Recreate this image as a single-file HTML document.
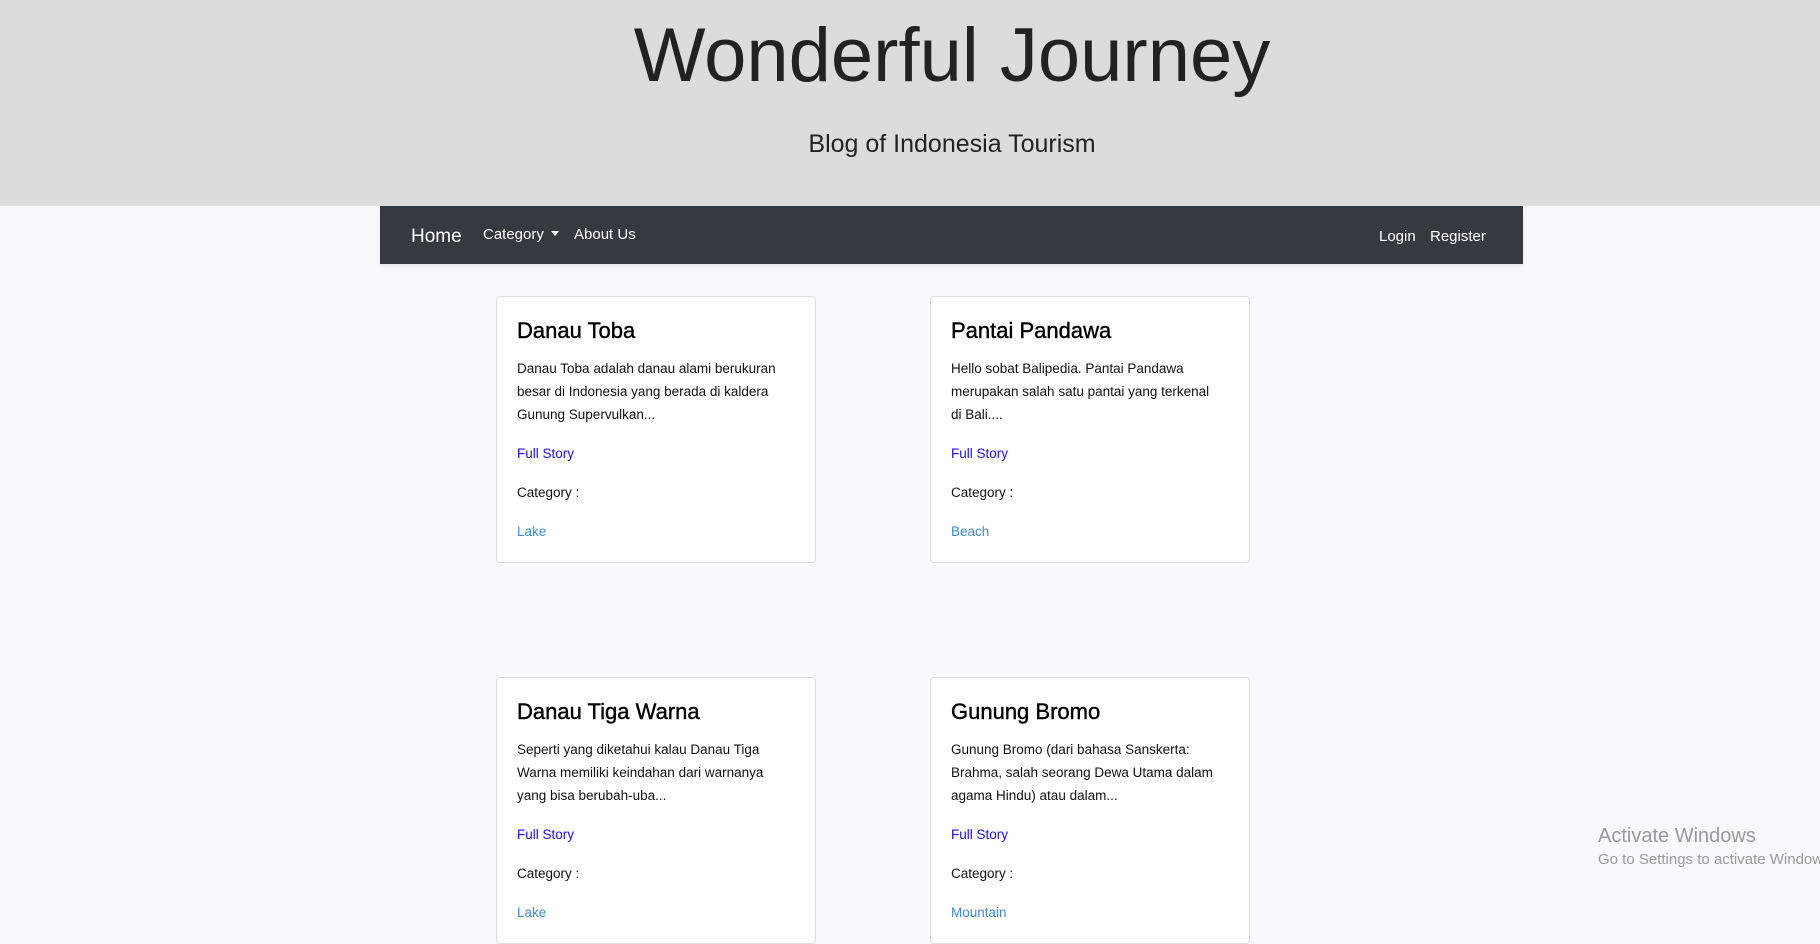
<!DOCTYPE html>
<html><head><meta charset="utf-8"><style>
*{margin:0;padding:0;box-sizing:border-box}
body{width:1820px;height:918px;overflow:hidden;background:#f8f9fa;font-family:"Liberation Sans",sans-serif;position:relative;color:#212529}
.hdr{position:absolute;left:0;top:0;width:1820px;height:206px;background:#dcdcdc}
.t{position:absolute;left:0;width:1904px;text-align:center}
.nav{position:absolute;left:380px;top:206px;width:1143px;height:58px;background:#343a40;box-shadow:0 2px 4px rgba(0,0,0,.08);color:#fff}
.nav span{position:absolute;top:0;line-height:58px;font-size:15px}
.card{position:absolute;width:320px;height:267px;background:#fff;border:1px solid #ddd;border-radius:4px}
.card h3{position:absolute;left:20px;top:21px;font-size:22px;font-weight:normal;color:#000;-webkit-text-stroke:.4px #000}
.card p{position:absolute;left:20px;top:60px;width:272px;font-size:13.5px;line-height:23px;color:#111}
.card .a{position:absolute;left:20px;font-size:13.5px}
</style></head><body>
<div class="hdr"></div>
<div class="t" style="top:12px;font-size:76px;color:#222">Wonderful Journey</div>
<div class="t" style="top:130px;font-size:25px;color:#222">Blog of Indonesia Tourism</div>
<div class="nav">
<span style="left:31px;font-size:19px;top:2px">Home</span>
<span style="left:103px">Category <span style="position:relative;display:inline-block;line-height:0;border-left:4px solid transparent;border-right:4px solid transparent;border-top:5px solid #fff;top:-3px;margin-left:3px"></span></span>
<span style="left:194px">About Us</span>
<span style="left:999px;top:2px">Login</span>
<span style="left:1050px;top:2px">Register</span>
</div>

<div class="card" style="left:496px;top:296px"><h3>Danau Toba</h3><p>Danau Toba adalah danau alami berukuran besar di Indonesia yang berada di kaldera Gunung Supervulkan...</p><div class="a" style="top:149px;color:#1a0dff">Full Story</div><div class="a" style="top:188px;color:#111">Category :</div><div class="a" style="top:227px;color:#3d8be0">Lake</div></div>
<div class="card" style="left:930px;top:296px"><h3>Pantai Pandawa</h3><p>Hello sobat Balipedia. Pantai Pandawa merupakan salah satu pantai yang terkenal di Bali....</p><div class="a" style="top:149px;color:#1a0dff">Full Story</div><div class="a" style="top:188px;color:#111">Category :</div><div class="a" style="top:227px;color:#3d8be0">Beach</div></div>
<div class="card" style="left:496px;top:677px"><h3>Danau Tiga Warna</h3><p>Seperti yang diketahui kalau Danau Tiga Warna memiliki keindahan dari warnanya yang bisa berubah-uba...</p><div class="a" style="top:149px;color:#1a0dff">Full Story</div><div class="a" style="top:188px;color:#111">Category :</div><div class="a" style="top:227px;color:#3d8be0">Lake</div></div>
<div class="card" style="left:930px;top:677px"><h3>Gunung Bromo</h3><p>Gunung Bromo (dari bahasa Sanskerta: Brahma, salah seorang Dewa Utama dalam agama Hindu) atau dalam...</p><div class="a" style="top:149px;color:#1a0dff">Full Story</div><div class="a" style="top:188px;color:#111">Category :</div><div class="a" style="top:227px;color:#3d8be0">Mountain</div></div>

<div style="position:absolute;left:1598px;top:825px;font-size:20px;color:#999;white-space:nowrap">Activate Windows</div>
<div style="position:absolute;left:1598px;top:851px;font-size:15px;color:#999;white-space:nowrap">Go to Settings to activate Windows.</div>
</body></html>
